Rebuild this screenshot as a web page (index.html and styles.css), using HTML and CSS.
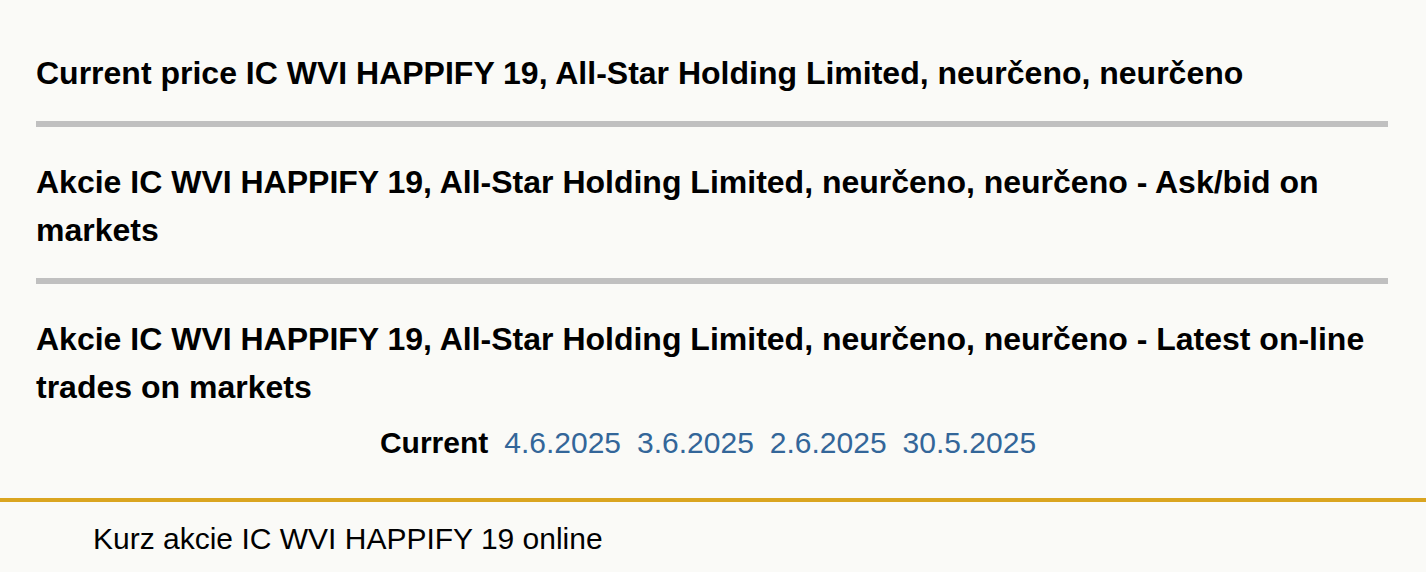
FILE: index.html
```html
<!DOCTYPE html>
<html lang="cs">
<head>
<meta charset="utf-8">
<title>IC WVI HAPPIFY 19</title>
<link rel="stylesheet" href="styles.css">
</head>
<body>
<main class="content">
  <section class="block">
    <h2 class="title">Current price IC WVI HAPPIFY 19, All-Star Holding Limited, neurčeno, neurčeno</h2>
  </section>
  <section class="block">
    <h2 class="title">Akcie IC WVI HAPPIFY 19, All-Star Holding Limited, neurčeno, neurčeno - Ask/bid on markets</h2>
  </section>
  <section class="block last">
    <h2 class="title">Akcie IC WVI HAPPIFY 19, All-Star Holding Limited, neurčeno, neurčeno - Latest on-line trades on markets</h2>
    <nav class="dates">
      <strong class="current">Current</strong>
      <a href="#">4.6.2025</a>
      <a href="#">3.6.2025</a>
      <a href="#">2.6.2025</a>
      <a href="#">30.5.2025</a>
    </nav>
  </section>
</main>
<footer class="footer">
  <p class="footer-text">Kurz akcie IC WVI HAPPIFY 19 online</p>
</footer>
</body>
</html>
```
FILE: styles.css
```css
html, body {
  margin: 0;
  padding: 0;
  background: #fafaf7;
  font-family: "Liberation Sans", Arial, sans-serif;
  color: #000;
}
.content {
  padding: 49px 38px 0 36px;
}
.block {
  border-bottom: 6px solid #c0c0c0;
  padding-bottom: 24px;
  margin-bottom: 31px;
}
.block.last {
  border-bottom: none;
  padding-bottom: 0;
  margin-bottom: 0;
}
.title {
  margin: 0;
  font-size: 32px;
  line-height: 48px;
  font-weight: bold;
}
.dates {
  display: flex;
  justify-content: center;
  gap: 16px;
  font-size: 30px;
  line-height: 48px;
  padding: 8px 8px 31px 0;
}
.dates a {
  color: #336699;
  text-decoration: none;
}
.footer {
  border-top: 4px solid #daa520;
}
.footer-text {
  margin: 0;
  padding: 13px 0 0 93px;
  font-size: 30px;
  line-height: 48px;
}
```
